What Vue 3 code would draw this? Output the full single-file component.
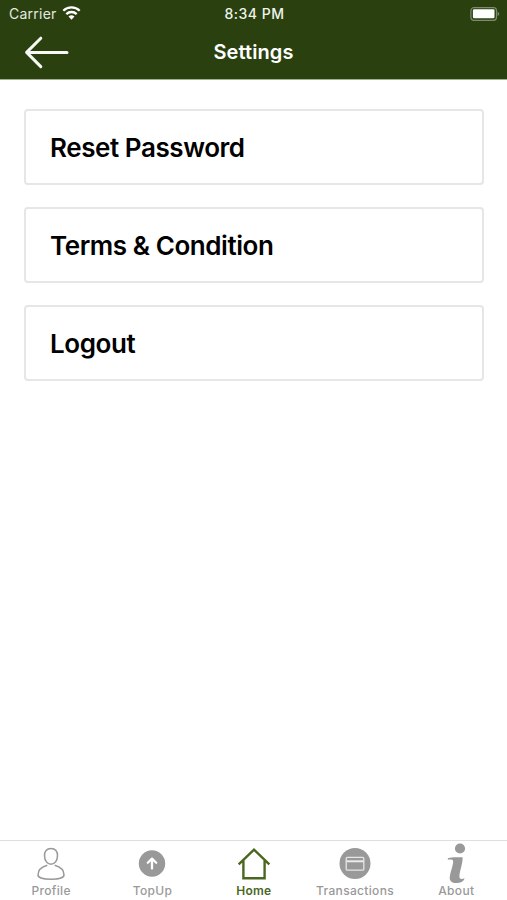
<script setup>
const items = ['Reset Password', 'Terms & Condition', 'Logout']
const tabs = ['Profile', 'TopUp', 'Home', 'Transactions', 'About']
</script>

<template>
  <div class="screen">
    <header class="header">
      <div class="status">
        <div class="carrier">
          <span>Carrier</span>
          <svg class="wifi" width="19" height="15" viewBox="0 0 19 15">
            <path d="M1.3 4.700C5.8 .2 13.2 .2 17.7 4.700" />
            <path d="M4.300 8.100C7.200 5.300 11.800 5.300 14.700 8.100" />
            <path class="dot" d="M6.500 10.400Q9.500 8 12.500 10.400L9.500 13.700Z" />
          </svg>
        </div>
        <time class="time">8:34 PM</time>
        <svg class="battery" width="30" height="14" viewBox="0 0 30 14">
          <rect class="shell" x=".9" y=".7" width="25.600" height="12.600" rx="3" />
          <rect class="charge" x="2.900" y="2.300" width="21.600" height="9" rx="1.200" />
          <path class="tip" d="M27.600 4.800Q31 7 27.600 9.200Z" />
        </svg>
      </div>
      <div class="nav">
        <svg class="back" width="46" height="34" viewBox="0 0 46 34">
          <path d="M17.800 3.200L3.600 17.400L17.800 31.600M4 17.400H44" />
        </svg>
        <h1>Settings</h1>
      </div>
    </header>

    <main class="list">
      <button v-for="item in items" :key="item" class="card">
        <span>{{ item }}</span>
      </button>
    </main>

    <nav class="tabbar">
      <div v-for="tab in tabs" :key="tab" class="tab" :class="tab.toLowerCase()">
        <svg v-if="tab === 'Profile'" width="36" height="42" viewBox="0 0 36 42">
          <path class="line" d="M18 7.500C22.300 7.500 24.700 10.500 24.500 14.900C24.300 19.700 21.700 23.300 18 23.300S11.700 19.700 11.500 14.900C11.300 10.500 13.700 7.500 18 7.500Z" />
          <path class="line" d="M14.300 24.200C9 25.700 5 28 5 34C5 36.700 11 38.200 18 38.200S31 36.700 31 34C31 28 27 25.700 21.700 24.200" />
        </svg>
        <svg v-else-if="tab === 'TopUp'" width="36" height="42" viewBox="0 0 36 42">
          <circle cx="18" cy="22.500" r="13.200" />
          <path class="arrow" d="M18 27.500V18M13.800 21.800L18 17.600L22.200 21.800" />
        </svg>
        <svg v-else-if="tab === 'Home'" width="36" height="42" viewBox="0 0 36 42">
          <path class="house" d="M2.700 23.300L18 8.700L33.300 23.300M7.400 19V37.200H28.600V19" />
        </svg>
        <svg v-else-if="tab === 'Transactions'" width="36" height="42" viewBox="0 0 36 42">
          <circle cx="18" cy="22.500" r="15.500" />
          <rect class="outline" x="9.200" y="16.400" width="17.600" height="12.800" rx="1.200" />
          <path class="stripe" d="M9.500 20.300H26.500" />
        </svg>
        <svg v-else width="36" height="42" viewBox="0 0 36 42">
          <circle cx="22" cy="7.500" r="5.100" />
          <path d="M10 17.200C14 15.800 19 16.300 24.600 16.300C25 22 21.600 30 21.400 35.300C21.300 38.600 24 38.300 26.600 37.200C25.600 40.500 22.300 42 18 42C13 42 11.100 39.300 11.900 35C12.500 30.400 15 24.800 15.200 20.800C15.300 18.500 13.500 18.300 9.700 18.700Z" />
        </svg>
        <span>{{ tab }}</span>
      </div>
    </nav>
  </div>
</template>

<style>
body {
  margin: 0;
  background: #fff;
}
</style>

<style scoped>
.screen {
  display: flex;
  flex-direction: column;
  height: 900px;
  overflow: hidden;
  background: #fff;
  font-family: Inter, "Liberation Sans", sans-serif;
}
.header {
  box-sizing: border-box;
  flex: none;
  height: 80px;
  border-bottom: 1px solid #a3b095;
  background: #2a400f;
  color: #fff;
}
.status {
  display: grid;
  grid-template-columns: 1fr auto 1fr;
  align-items: center;
  height: 27px;
  padding: 0 7px 0 9px;
}
.carrier {
  display: flex;
  align-items: center;
  gap: 5px;
  font-size: 14px;
  line-height: 18px;
  letter-spacing: 0.25px;
  color: #e5e9e1;
}
.wifi {
  fill: none;
  stroke: #fff;
  stroke-width: 2.3;
}
.wifi .dot {
  fill: #fff;
  stroke: none;
}
.time {
  font-size: 14px;
  font-weight: 500;
  letter-spacing: 0.5px;
  color: #f0f3ed;
}
.battery {
  justify-self: end;
}
.shell {
  fill: none;
  stroke: #7d8c6d;
  stroke-width: 1.2;
}
.charge {
  fill: #fff;
}
.tip {
  fill: #7d8c6d;
}
.nav {
  display: grid;
  grid-template-columns: 1fr auto 1fr;
  align-items: center;
  height: 50px;
  padding: 0 23px;
}
.back {
  fill: none;
  stroke: #f7f8f5;
  stroke-width: 3;
  stroke-linecap: round;
  stroke-linejoin: round;
}
h1 {
  margin: 0;
  font-size: 20px;
  line-height: 26px;
  font-weight: 600;
  letter-spacing: 0.1px;
}
.list {
  flex: 1;
  display: flex;
  flex-direction: column;
  gap: 22px;
  padding: 29px 23px 0 24px;
}
.card {
  box-sizing: border-box;
  flex: none;
  height: 76px;
  padding: 2px 0 0 24px;
  border: 2px solid #e6e6e6;
  border-radius: 4px;
  background: #fff;
  color: #000;
  text-align: left;
  font: 600 26px/32px Inter, "Liberation Sans", sans-serif;
  letter-spacing: -0.43px;
}
.tabbar {
  box-sizing: border-box;
  flex: none;
  display: grid;
  grid-template-columns: repeat(5, 101.3px);
  justify-content: end;
  height: 60px;
  border-top: 1px solid #dedede;
}
.tab {
  display: flex;
  flex-direction: column;
  align-items: center;
  color: #999;
  fill: #999;
  font-size: 12px;
  line-height: 16px;
  font-weight: 500;
  letter-spacing: 0.33px;
}
.tab.home {
  color: #4a671f;
  font-weight: 600;
  letter-spacing: 0.2px;
}
.line {
  fill: none;
  stroke: #999;
  stroke-width: 1.5;
}
.arrow {
  fill: none;
  stroke: #fff;
  stroke-width: 2.3;
  stroke-linecap: round;
  stroke-linejoin: round;
}
.house {
  fill: none;
  stroke: #4a671f;
  stroke-width: 2.4;
}
.outline {
  fill: none;
  stroke: #e6e6e6;
  stroke-width: 1.3;
}
.stripe {
  stroke: #eee;
  stroke-width: 1.9;
}
</style>
